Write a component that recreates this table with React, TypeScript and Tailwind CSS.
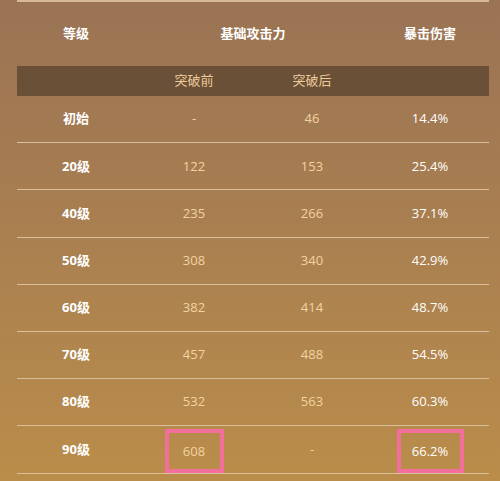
import React from 'react';

type Row = { level: string; before: string; after: string; crit: string; mark?: boolean };

const rows: Row[] = [
  { level: '初始', before: '-', after: '46', crit: '14.4%' },
  { level: '20级', before: '122', after: '153', crit: '25.4%' },
  { level: '40级', before: '235', after: '266', crit: '37.1%' },
  { level: '50级', before: '308', after: '340', crit: '42.9%' },
  { level: '60级', before: '382', after: '414', crit: '48.7%' },
  { level: '70级', before: '457', after: '488', crit: '54.5%' },
  { level: '80级', before: '532', after: '563', crit: '60.3%' },
  { level: '90级', before: '608', after: '-', crit: '66.2%', mark: true },
];

const font = { fontFamily: '"Open Sans", "Noto Sans CJK SC", sans-serif' };

export default function App() {
  return (
    <div
      className="w-[500px] h-[481px] overflow-hidden bg-gradient-to-b from-[#9a7354] to-[#ba8d4a] pl-[17px] pr-[11px] text-[13px]"
      style={font}
    >
      <div className="w-[472px] border-t-2 border-[#d7b998]">
        {/* header */}
        <div className="grid grid-cols-4 h-[64px] items-center text-center font-bold text-white">
          <div>等级</div>
          <div className="col-span-2">基础攻击力</div>
          <div>暴击伤害</div>
        </div>
        {/* sub header */}
        <div className="grid grid-cols-4 h-[30px] items-center text-center bg-[#6b5038] text-[#eccb9a]">
          <div></div>
          <div>突破前</div>
          <div>突破后</div>
          <div></div>
        </div>
        {/* rows */}
        {rows.map((r) => (
          <div
            key={r.level}
            className="grid grid-cols-4 h-[47.2px] items-center text-center border-b border-[#d9bf9c]"
          >
            <div className="font-bold text-white">{r.level}</div>
            <div className="text-[#f2d3a2] flex justify-center">
              {r.mark ? (
                <span className="relative top-[2px] inline-flex w-[59px] h-[44px] items-center justify-center border-4 border-[#f16f9a]">
                  {r.before}
                </span>
              ) : (
                r.before
              )}
            </div>
            <div className="text-[#f2d3a2]">{r.after}</div>
            <div className="text-white flex justify-center">
              {r.mark ? (
                <span className="relative top-[2px] inline-flex w-[67px] h-[44px] items-center justify-center border-4 border-[#f16f9a]">
                  {r.crit}
                </span>
              ) : (
                r.crit
              )}
            </div>
          </div>
        ))}
      </div>
    </div>
  );
}
